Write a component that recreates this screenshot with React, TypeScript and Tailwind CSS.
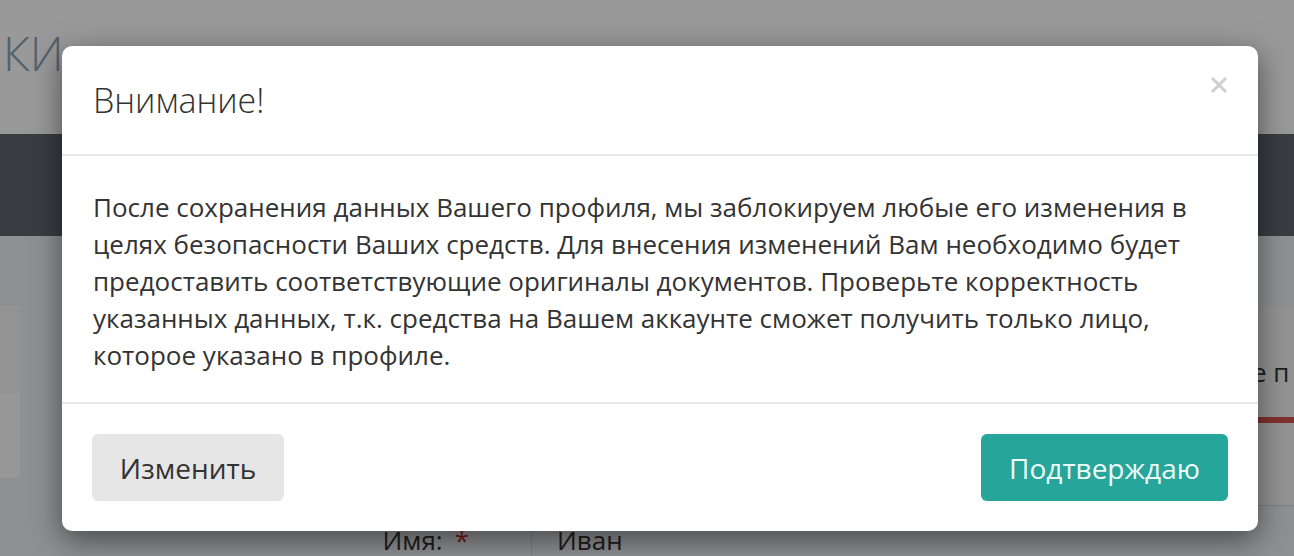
import React from "react";

export default function App() {
  return (
    <div className="relative h-[556px] w-full overflow-hidden bg-[#eef0f3] font-['Open_Sans',sans-serif]">
      {/* page behind */}
      <header className="h-[134px] bg-white">
        <div className="pl-[3px] pt-[24px] text-[47px] font-light leading-[58px] text-[#8aa2b6]">КИ</div>
      </header>
      <div className="h-[102px] bg-[#60666e]" />
      <div className="flex h-[320px]">
        <div className="mt-[70px] flex h-[172px] w-[20px] flex-col">
          <div className="h-[88px] bg-[#f5f6f7]" />
          <div className="h-[84px] rounded-br-[4px] bg-[#fcfcfc]" />
        </div>
        <div className="flex flex-1 flex-col justify-end">
          <div className="flex h-[30px] items-start">
            <div className="flex w-[511px] justify-end pr-[62px] text-[26px] leading-[28px] text-[#333]">
              Имя:<span className="ml-[12px] text-[#c9302c]">*</span>
            </div>
            <div className="h-full border-l border-[#d8d8d8] pl-[25px] text-[26px] leading-[28px] text-[#333]">Иван</div>
          </div>
        </div>
        <div className="mt-[70px] flex h-[200px] w-[50px] flex-col border-b border-[#cfd2d5] bg-[#f6f6f6]">
          <div className="pl-[8px] pt-[48px] text-[26px] leading-[37px] whitespace-nowrap text-[#333]">е п</div>
          <div className="mt-[26px] h-[6px] bg-[#d9534f]" />
        </div>
      </div>

      {/* overlay */}
      <div className="absolute inset-0 bg-black/40" />

      {/* modal */}
      <div className="absolute inset-0 flex justify-start pl-[62px] pt-[46px]">
        <div className="h-[485px] w-[1196px] rounded-[10px] bg-white shadow-[0_9px_30px_rgba(0,0,0,0.5)]">
          <div className="flex h-[110px] items-start justify-between border-b-2 border-[#e8e8e8] px-[31px]">
            <h4 className="pt-[34px] text-[34px] font-light leading-[40px] text-[#333]">Внимание!</h4>
            <button className="mt-[30px] mr-[-1px] flex h-[18px] w-[18px] items-center justify-center">
              <svg width="18" height="18" viewBox="0 0 18 18">
                <path d="M2 2 L16 16 M16 2 L2 16" stroke="#cfcfcf" strokeWidth="3" />
              </svg>
            </button>
          </div>
          <div className="h-[248px] border-b-2 border-[#e8e8e8] px-[31px] pt-[33px]">
            <p className="text-[26px] leading-[37px] text-[#333]">
              После сохранения данных Вашего профиля, мы заблокируем любые его изменения в целях безопасности Ваших средств. Для внесения изменений Вам необходимо будет предоставить соответствующие оригиналы документов. Проверьте корректность указанных данных, т.к. средства на Вашем аккаунте сможет получить только лицо, которое указано в профиле.
            </p>
          </div>
          <div className="flex justify-between px-[30px] pt-[30px]">
            <button className="h-[67px] w-[192px] rounded-[6px] bg-[#e6e6e6] text-[28px] text-[#333]">Изменить</button>
            <button className="h-[67px] w-[247px] rounded-[6px] bg-[#26a69a] text-[28px] text-[#eefaf8]">Подтверждаю</button>
          </div>
        </div>
      </div>
    </div>
  );
}
